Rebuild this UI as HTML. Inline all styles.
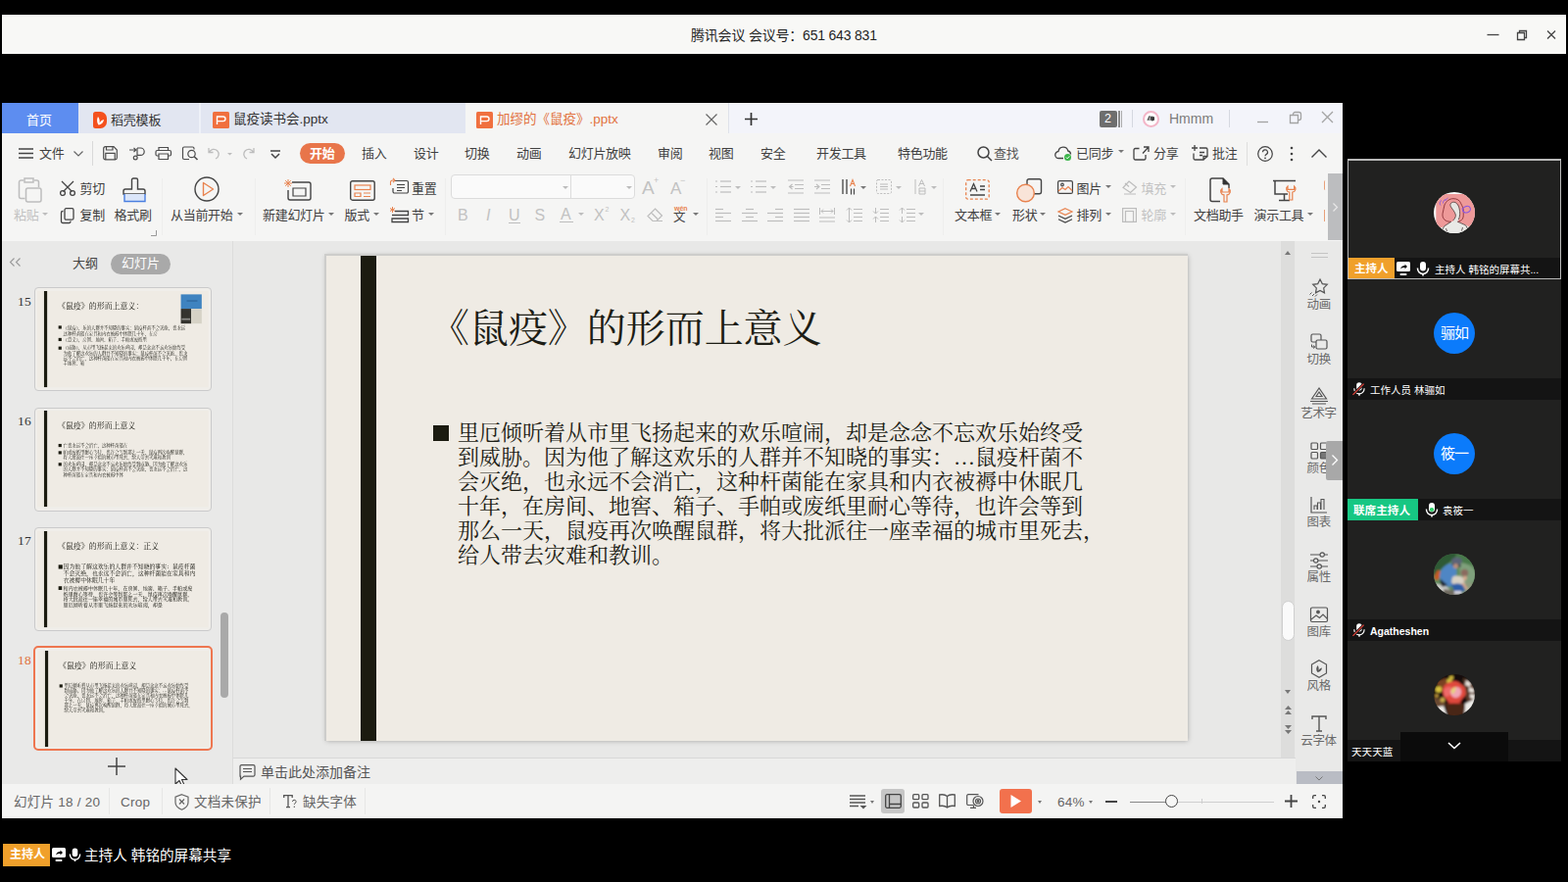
<!DOCTYPE html>
<html lang="zh-CN">
<head>
<meta charset="utf-8">
<title>腾讯会议</title>
<style>
*{box-sizing:border-box;margin:0;padding:0}
html,body{width:1600px;height:900px;overflow:hidden;background:#000}
body{font-family:"Liberation Sans","Noto Sans CJK SC",sans-serif;position:relative;color:#333}
.a{position:absolute}
.t{position:absolute;white-space:nowrap;line-height:1}
svg{position:absolute;overflow:visible}
#vid{left:0;top:0;width:0;height:0}
/* top meeting bar */
#topbar{left:2px;top:15px;width:1596px;height:40px;background:#f8f8f6}
/* ppt window */
#win{left:2px;top:105px;width:1368px;height:730px;background:#e8e8e7;overflow:hidden}
#tabbar{left:0;top:0;width:1368px;height:31px;background:#f3f4fa}
#menurow{left:0;top:31px;width:1368px;height:40px;background:#f5f5f4}
#ribbon{left:0;top:71px;width:1368px;height:70px;background:#f5f5f4}
#leftpane{left:0;top:141px;width:236px;height:554px;background:#e9e9e8}
#edit{left:236px;top:141px;width:1084px;height:527px;background:#e8e8e7}
#slide{left:331px;top:156px;width:879px;height:495px;background:#efebe4;box-shadow:-1px -1px 0 1px #cdcdcb,0 0 5px rgba(0,0,0,.3)}
#notes{left:236px;top:668px;width:1084px;height:27px;background:#eeeeed;border-top:1px solid #d8d8d8}
#taskpane{left:1320px;top:141px;width:48px;height:554px;background:#e9e9e8}
#status{left:0;top:695px;width:1368px;height:35px;background:#f4f4f3}
.mi{top:14px;font-size:13px;color:#404040;letter-spacing:-.3px;--ls:-.3px}

.sl{width:879px;height:495px;background:#efebe4;overflow:hidden;font-family:"Liberation Serif","Noto Serif CJK SC",serif;color:#1d1d15}
.sl .bar{left:34.500px;top:0;width:16.500px;height:495px;background:#1b1b10}
.sl .ti{font-size:40px;line-height:40px;white-space:nowrap;letter-spacing:-.05px;--ls:-.05px}
.sl .bd{left:134px;white-space:nowrap}
.sl .bu{left:108.500px;background:#1b1b10}
.th{left:33px;width:181px;height:106px;border:1.500px solid #cacacb;border-radius:4px;background:#f0eeea;overflow:hidden}
.th .sl{left:2px;top:2.500px;color:#15150e;transform:scale(.1986);transform-origin:0 0}
.tn{left:16px;font-family:"Liberation Serif",serif;font-size:13.500px;color:#333;line-height:1;letter-spacing:.3px;--ls:.3px}
/* video panel */
.tile{left:1375px;width:218px;height:123px;background:#212120;color:#fff}
.lbl{left:0;top:101px;width:218px;height:22px;background:#141414}
.av{left:88px;top:34px;width:42px;height:42px;border-radius:50%;overflow:hidden}
.avt{color:#fff;font-size:15px;text-align:center;line-height:42px;background:#0b7bfb;letter-spacing:-1px;--ls:-1px}
.nm{top:6.500px;font-size:10.500px;color:#fff}
</style>
</head>
<body>

<div class="a" id="topbar">
  <div class="t" style="left:703px;top:14px;font-size:14px;color:#1f1f1f;letter-spacing:-.2px;--ls:-.2px">腾讯会议 会议号：651 643 831&nbsp;</div>
  <svg style="left:1515px;top:14px" width="76" height="14" fill="none" stroke="#444" stroke-width="1.3">
    <path d="M0.5 6.5h12"/>
    <path d="M31.5 4.5h7v7h-7zM33.5 4.5v-2h7v7h-2"/>
    <path d="M62 2.5l8 8M70 2.5l-8 8"/>
  </svg>
</div>

<div class="a" id="win">
  <div class="a" id="tabbar">
    <div class="a" style="left:0;top:0;width:78px;height:31px;background:#5d8df0"></div>
    <div class="t" style="left:25px;top:11px;font-size:13px;color:#fff">首页&nbsp;</div>
    <div class="a" style="left:78px;top:0;width:395px;height:31px;background:#e2e6f1"></div>
    <div class="a" style="left:201px;top:0;width:2px;height:31px;background:#eef1f8"></div>
    <svg style="left:93px;top:9px" width="14" height="17" viewBox="0 0 14 17"><path d="M2.500 0h5a6.500 6.500 0 0 1 6.500 6.500v4a6.500 6.500 0 0 1-6.500 6.500h-5a2.500 2.500 0 0 1-2.500-2.500v-12a2.500 2.500 0 0 1 2.500-2.500z" fill="#f4511e"/><path d="M5.500 13.500c-1.800-2.500-1.800-6 -.5-8.500 1.500 2 2 4.500 1.500 6.500 1.200-2 2.800-3.200 4.500-3.500-.3 3-2.500 5-5 5.500z" fill="#fff"/></svg>
    <div class="t" style="left:111px;top:11px;font-size:13px;color:#333;letter-spacing:-.2px;--ls:-.2px">稻壳模板&nbsp;</div>
    <svg style="left:215px;top:9px" width="17" height="17" viewBox="0 0 17 17"><rect width="17" height="17" rx="1.500" fill="#f0703f"/><path d="M4.500 13v-8h6.200a2.300 2.300 0 0 1 0 4.600h-6.200" fill="none" stroke="#fff" stroke-width="1.400"/></svg>
    <div class="t" style="left:236px;top:10px;font-size:13.500px;color:#333">鼠疫读书会.pptx&nbsp;</div>
    <div class="a" style="left:473px;top:0;width:268px;height:32px;background:#f5f5f4"></div>
    <svg style="left:484px;top:9px" width="17" height="17" viewBox="0 0 17 17"><rect width="17" height="17" rx="1.500" fill="#f0703f"/><path d="M4.500 13v-8h6.200a2.300 2.300 0 0 1 0 4.600h-6.200" fill="none" stroke="#fff" stroke-width="1.400"/></svg>
    <div class="t" style="left:505px;top:10px;font-size:13.500px;color:#e2733f">加缪的《鼠疫》.pptx&nbsp;</div>
    <svg style="left:718px;top:11px" width="12" height="12" fill="none" stroke="#666" stroke-width="1.200"><path d="M.5.5l11 11M11.500.5l-11 11"/></svg>
    <div class="a" style="left:741px;top:0;width:1px;height:31px;background:#dfe2ea"></div>
    <svg style="left:758px;top:10px" width="13" height="13" fill="none" stroke="#333" stroke-width="1.700"><path d="M6.500 0v13M0 6.500h13"/></svg>
    <div class="a" style="left:1120px;top:8px;width:18px;height:17px;background:#6e6e6e;border-radius:2px"></div>
    <div class="t" style="left:1125px;top:10px;font-size:12.500px;color:#fff">2</div>
    <div class="a" style="left:1139px;top:8px;width:1.500px;height:17px;background:#8a8a8a"></div>
    <div class="a" style="left:1141.500px;top:8px;width:1px;height:17px;background:#aaa"></div>
    <div class="a" style="left:1153px;top:7px;width:1px;height:18px;background:#d5d8e0"></div>
    <div class="a" style="left:1164px;top:8px;width:17px;height:17px;border-radius:50%;background:#fff;border:2px solid #f3b6c8"></div>
    <svg style="left:1168px;top:12px" width="9" height="8" fill="none" stroke="#3a3a3a" stroke-width="1"><path d="M1 6l1.500-4M3 6v-5M4.500 2l3 .5v3l-2.500.5z" /><path d="M5 3h2v2.500h-2z" fill="#3a3a3a"/></svg>
    <div class="t" style="left:1191px;top:9px;font-size:14px;color:#7b7b7b">Hmmm</div>
    <div class="a" style="left:1252px;top:7px;width:1px;height:18px;background:#d5d8e0"></div>
    <svg style="left:1281px;top:8px" width="80" height="14" fill="none" stroke="#a3a3a3" stroke-width="1.300"><path d="M0 11.500h11"/><path d="M33.500 4.500h8v8h-8zM36.500 4.500v-1a2 2 0 0 1 2-2h4a2 2 0 0 1 2 2v4a2 2 0 0 1-2 2h-1" /><path d="M66 1l11 11M77 1l-11 11"/></svg>
  </div>
  <div class="a" id="menurow">
    <svg style="left:17px;top:15px" width="15" height="11" fill="none" stroke="#444" stroke-width="1.500"><path d="M0 1h15M0 5.500h15M0 10h15"/></svg>
    <div class="t mi" style="left:38px">文件&nbsp;</div>
    <svg style="left:73px;top:18px" width="10" height="6" fill="none" stroke="#666" stroke-width="1.200"><path d="M.5.5l4.500 4.500 4.500-4.500"/></svg>
    <div class="a" style="left:92px;top:8px;width:1px;height:25px;background:#d9d9d9"></div>
    <svg style="left:103px;top:13px" width="130" height="15" fill="none" stroke="#4d4d4d" stroke-width="1.200">
      <path d="M.7 2.500a1.800 1.800 0 0 1 1.800-1.800h8.500l3.300 3.300v8a1.800 1.800 0 0 1-1.800 1.800h-10a1.800 1.800 0 0 1-1.800-1.800zM3.500 1v3h6.500v-3M2.800 13.500v-6.200h9.400v6.200"/>
      <path d="M27 4h6.500M31.500 1.800l2.200 2.200-2.200 2.200M35 2h3.500a3.700 3.700 0 0 1 0 7.400h-3.500M35 2v8.300"/><circle cx="33.200" cy="12" r="1.900"/>
      <path d="M57 4.500v-3h9.500v3M57 10h-1.500a1.500 1.500 0 0 1-1.500-1.500v-2.500a1.500 1.500 0 0 1 1.500-1.500h12.500a1.500 1.500 0 0 1 1.500 1.500v2.500a1.500 1.500 0 0 1-1.500 1.500h-1.500M57 8h9.500v5.500h-9.500z"/>
      <path d="M88 13.500h-5a1.500 1.500 0 0 1-1.500-1.500v-9.500a1.500 1.500 0 0 1 1.500-1.500h8.500a1.500 1.500 0 0 1 1.500 1.500v1"/><circle cx="90.500" cy="8" r="3.700"/><path d="M93.200 10.800l3.300 3.200" stroke-width="1.600"/>
    </svg>
    <svg style="left:210px;top:14px" width="50" height="14" fill="none" stroke="#bdbdbd" stroke-width="1.300">
      <path d="M1 1v4.500h4.500M1.500 5.500a5 5 0 1 1 6.500 6.500"/>
      <path d="M47 1v4.500h-4.500M46.500 5.500a5 5 0 1 0-6.500 6.500"/>
      <path d="M20 6h5l-2.500 2.500z" fill="#bdbdbd" stroke="none"/>
    </svg>
    <svg style="left:274px;top:17px" width="10" height="9" fill="none" stroke="#444" stroke-width="1.500"><path d="M0 1h10M1 4l4 4 4-4"/></svg>
    <div class="a" style="left:304px;top:10px;width:46px;height:21px;border-radius:11px;background:#e8754a"></div>
    <div class="t mi" style="left:314px;color:#fff;font-weight:bold">开始&nbsp;</div>
    <div class="t mi" style="left:367px">插入&nbsp;</div>
    <div class="t mi" style="left:420px">设计&nbsp;</div>
    <div class="t mi" style="left:472px">切换&nbsp;</div>
    <div class="t mi" style="left:525px">动画&nbsp;</div>
    <div class="t mi" style="left:578px">幻灯片放映&nbsp;</div>
    <div class="t mi" style="left:669px">审阅&nbsp;</div>
    <div class="t mi" style="left:721px">视图&nbsp;</div>
    <div class="t mi" style="left:774px">安全&nbsp;</div>
    <div class="t mi" style="left:831px">开发工具&nbsp;</div>
    <div class="t mi" style="left:914px">特色功能&nbsp;</div>
    <svg style="left:995px;top:13px" width="16" height="16" fill="none" stroke="#444" stroke-width="1.500"><circle cx="6.500" cy="6.500" r="5.500"/><path d="M10.500 10.500l4.500 4.500"/></svg>
    <div class="t mi" style="left:1012px;color:#555">查找&nbsp;</div>
    <svg style="left:1074px;top:13px" width="20" height="16" viewBox="0 0 20 16"><path d="M9 12.500h-4.500a3.500 3.500 0 0 1-.5-7 5 5 0 0 1 9.800-.5 3.500 3.500 0 0 1 2.700 3.500" fill="none" stroke="#444" stroke-width="1.300"/><circle cx="13.500" cy="11.500" r="3.500" fill="#3bb54a"/><path d="M11.800 11.500l1.300 1.300 2.200-2.400" fill="none" stroke="#fff" stroke-width="1"/></svg>
    <div class="t mi" style="left:1096px">已同步&nbsp;</div>
    <div class="a" style="left:1139px;top:17px;border:3px solid transparent;border-top:3.500px solid #777"></div>
    <svg style="left:1154px;top:13px" width="17" height="15" fill="none" stroke="#444" stroke-width="1.300"><path d="M6.500 2.500h-4a1.500 1.500 0 0 0-1.500 1.500v8.500a1.500 1.500 0 0 0 1.500 1.500h9a1.500 1.500 0 0 0 1.500-1.500v-3.500M11 1h5v5M16 1l-6 6.500"/></svg>
    <div class="t mi" style="left:1175px">分享&nbsp;</div>
    <svg style="left:1214px;top:12px" width="17" height="16" fill="none" stroke="#444" stroke-width="1.300"><path d="M3 0v6M0 3h6M8 3h6.500a1.500 1.500 0 0 1 1.500 1.500v7h-4l0 3.500h-8.500a1.500 1.500 0 0 1-1.500-1.500v-5M16 11.500l-4 3.500M8 7.500h5M8 10.500h3"/></svg>
    <div class="t mi" style="left:1235px">批注&nbsp;</div>
    <div class="a" style="left:1270px;top:9px;width:1px;height:24px;background:#dedede"></div>
    <svg style="left:1281px;top:13px" width="16" height="16" fill="none" stroke="#444" stroke-width="1.200"><circle cx="8" cy="8" r="7.300"/><path d="M5.500 6.300a2.500 2.500 0 1 1 3.500 2.300c-.8.400-1 .8-1 1.700"/><circle cx="8" cy="12.300" r=".9" fill="#444" stroke="none"/></svg>
    <svg style="left:1314px;top:13px" width="4" height="16" fill="#444"><circle cx="2" cy="2" r="1.300"/><circle cx="2" cy="8" r="1.300"/><circle cx="2" cy="14" r="1.300"/></svg>
    <svg style="left:1336px;top:16px" width="16" height="9" fill="none" stroke="#444" stroke-width="1.400"><path d="M.5 8.500l7.500-7.500 7.500 7.500"/></svg>
  </div>
  <div class="a" id="ribbon">
    <svg style="left:17px;top:5px" width="24" height="26" fill="none" stroke="#bdbdbd" stroke-width="1.5"><path d="M5 3h-2.500a2 2 0 0 0-2 2v14.500a2 2 0 0 0 2 2h4M16 3h2.500a2 2 0 0 1 2 2v5M6 1h9v4h-9z"/><rect x="7.500" y="11" width="15.500" height="14" rx="2" fill="#f5f5f4"/></svg>
    <div class="t" style="left:12px;top:37.0px;font-size:13px;color:#c2c2c2;letter-spacing:-.3px;--ls:-.3px;">粘贴&nbsp;</div>
    <div class="a" style="left:41px;top:40.5px;border:3px solid transparent;border-top:3.500px solid #bdbdbd"></div>
    <svg style="left:59px;top:9px" width="16" height="15" fill="none" stroke="#444" stroke-width="1.3"><path d="M2 0l10.500 10.500M14 0l-10.500 10.500"/><circle cx="3" cy="12" r="2.400"/><circle cx="13" cy="12" r="2.400"/></svg>
    <div class="t" style="left:79.5px;top:9.5px;font-size:13px;color:#404040;letter-spacing:-.3px;--ls:-.3px;">剪切&nbsp;</div>
    <svg style="left:60px;top:36px" width="14" height="16" fill="none" stroke="#444" stroke-width="1.3"><rect x="4" y=".7" width="9" height="11.500" rx="1.500"/><path d="M2.500 3.500h-.5a1.500 1.500 0 0 0-1.500 1.500v9a1.500 1.500 0 0 0 1.500 1.500h6.500a1.500 1.500 0 0 0 1.500-1.500v-.5"/></svg>
    <div class="t" style="left:79.5px;top:37.0px;font-size:13px;color:#404040;letter-spacing:-.3px;--ls:-.3px;">复制&nbsp;</div>
    <svg style="left:124px;top:6px" width="23" height="25" fill="none" stroke="#444" stroke-width="1.4"><path d="M8.500 1.500a1.500 1.500 0 0 1 1.500-1.500h3a1.500 1.500 0 0 1 1.500 1.500v9.500h5.500a2 2 0 0 1 2 2v3h-22v-3a2 2 0 0 1 2-2h6.500z"/><path d="M1 16v7.500h21v-7.500" stroke="#4a7fe0" fill="#dbe6fa"/></svg>
    <div class="t" style="left:114.5px;top:37.0px;font-size:13px;color:#404040;letter-spacing:-.3px;--ls:-.3px;">格式刷&nbsp;</div>
    <div class="a" style="left:163px;top:6px;width:1px;height:58px;background:#eeeeed"></div>
    <svg style="left:152px;top:59px" width="6" height="6" fill="none" stroke="#999" stroke-width="1"><path d="M5.500 0v5.500h-5.500"/></svg>
    <svg style="left:196px;top:4px" width="26" height="26" fill="none" stroke="#444" stroke-width="1.4"><circle cx="13" cy="13" r="12" /><path d="M9.500 6.500l10 6.500-10 6.500z" stroke="#e8834f" stroke-linejoin="round"/></svg>
    <div class="t" style="left:172px;top:37.0px;font-size:13px;color:#404040;letter-spacing:-.3px;--ls:-.3px;">从当前开始&nbsp;</div>
    <div class="a" style="left:240px;top:40.5px;border:3px solid transparent;border-top:3.500px solid #777"></div>
    <div class="a" style="left:258px;top:6px;width:1px;height:58px;background:#eeeeed"></div>
    <svg style="left:288px;top:7px" width="28" height="22" fill="none" stroke="#444" stroke-width="1.4"><path d="M8 3h17a2 2 0 0 1 2 2v14a2 2 0 0 1-2 2h-19a2 2 0 0 1-2-2v-8"/><path d="M9 9h13v8h-13z" stroke-width="1.200"/><path d="M4 0v8M0 4h8M1.200 1.200l5.600 5.600M6.800 1.200l-5.600 5.600" stroke="#e8834f" stroke-width="1"/></svg>
    <div class="t" style="left:266px;top:37.0px;font-size:13px;color:#404040;letter-spacing:-.3px;--ls:-.3px;">新建幻灯片&nbsp;</div>
    <div class="a" style="left:332.5px;top:40.5px;border:3px solid transparent;border-top:3.500px solid #777"></div>
    <svg style="left:355px;top:8px" width="26" height="21" fill="none" stroke="#444" stroke-width="1.4"><rect x=".7" y=".7" width="24.500" height="19.500" rx="2"/><rect x="5" y="5" width="16" height="4.500" stroke="#e8834f" stroke-width="1.200"/><path d="M5 13h6v3.500h-6zM14 13h7M14 16.500h7" stroke="#e8834f" stroke-width="1.200"/></svg>
    <div class="t" style="left:349.5px;top:37.0px;font-size:13px;color:#404040;letter-spacing:-.3px;--ls:-.3px;">版式&nbsp;</div>
    <div class="a" style="left:379px;top:40.5px;border:3px solid transparent;border-top:3.500px solid #777"></div>
    <svg style="left:396px;top:7px" width="19" height="15" fill="none" stroke="#444" stroke-width="1.2"><path d="M4 1.500h13a1.500 1.500 0 0 1 1.500 1.500v9.500a1.500 1.500 0 0 1-1.500 1.500h-12.500a1.500 1.500 0 0 1-1.500-1.500v-3.500"/><path d="M7 5.500h8M7 8.500h8M7 11.500h5" stroke-width="1"/><path d="M.5 6v-3a2 2 0 0 1 2-2h2M3 -1.200l2 2.200-2 2.200" stroke="#e8834f" stroke-width="1.100"/></svg>
    <div class="t" style="left:418px;top:9.5px;font-size:13px;color:#404040;letter-spacing:-.3px;--ls:-.3px;">重置&nbsp;</div>
    <svg style="left:396px;top:35px" width="19" height="16" fill="none" stroke="#444" stroke-width="1.3"><path d="M5 4.500h13.500v4h-16.500M2 12h16.500v3.500h-16.500z"/><path d="M2.500 0v6M0 1.500l5 3M5 1.500l-5 3" stroke="#e8834f" stroke-width="1"/></svg>
    <div class="t" style="left:418px;top:37.0px;font-size:13px;color:#404040;letter-spacing:-.3px;--ls:-.3px;">节&nbsp;</div>
    <div class="a" style="left:435px;top:40.5px;border:3px solid transparent;border-top:3.500px solid #777"></div>
    <div class="a" style="left:452px;top:6px;width:1px;height:58px;background:#eeeeed"></div>
    <div class="a" style="left:457.5px;top:2px;width:188px;height:25px;border:1px solid #dcdcdc;border-radius:4px;background:#fafafa"></div>
    <div class="a" style="left:580px;top:2px;width:1px;height:25px;background:#dcdcdc"></div>
    <div class="a" style="left:572px;top:13.500px;border:3px solid transparent;border-top:3.500px solid #bbb"></div>
    <div class="a" style="left:637px;top:13.500px;border:3px solid transparent;border-top:3.500px solid #bbb"></div>
    <div class="t" style="left:653px;top:6px;font-size:19px;color:#c2c2c2">A</div><div class="t" style="left:665px;top:4px;font-size:9px;color:#c2c2c2">+</div>
    <div class="t" style="left:682px;top:8px;font-size:17px;color:#c2c2c2">A</div><div class="t" style="left:692px;top:4px;font-size:9px;color:#c2c2c2">−</div>
    <div class="t" style="left:465px;top:35.5px;font-size:16px;color:#c2c2c2">B</div>
    <div class="t" style="left:494px;top:35.5px;font-size:16px;color:#c2c2c2;font-style:italic">I</div>
    <div class="t" style="left:517px;top:35.5px;font-size:16px;color:#c2c2c2">U</div><div class="a" style="left:517px;top:51px;width:12px;height:1px;background:#bdbdbd"></div>
    <div class="t" style="left:543.5px;top:35.5px;font-size:16px;color:#c2c2c2">S</div>
    <div class="t" style="left:570px;top:35px;font-size:16px;color:#c2c2c2">A</div><div class="a" style="left:568.5px;top:49.5px;width:14px;height:1.500px;background:#bdbdbd"></div>
    <div class="a" style="left:587.5px;top:40.5px;border:3px solid transparent;border-top:3.500px solid #bdbdbd"></div>
    <div class="t" style="left:604px;top:36px;font-size:16px;color:#c2c2c2">X</div><div class="t" style="left:615.5px;top:34px;font-size:7px;color:#c2c2c2">2</div>
    <div class="t" style="left:630.5px;top:36px;font-size:16px;color:#c2c2c2">X</div><div class="t" style="left:642px;top:45px;font-size:7px;color:#c2c2c2">2</div>
    <svg style="left:658px;top:36px" width="17" height="15" fill="none" stroke="#bdbdbd" stroke-width="1.2"><path d="M8.500 1l7 7-5.500 5.500h-4l-5-5zM6 13.500h10M4.500 5l6.500 6.500"/></svg>
    <div class="t" style="left:685px;top:39.5px;font-size:12.500px;color:#444">文&nbsp;</div><div class="t" style="left:686px;top:33px;font-size:7px;color:#e8834f;font-weight:bold">wén</div>
    <div class="a" style="left:705px;top:40.5px;border:3px solid transparent;border-top:3.500px solid #777"></div>
    <div class="a" style="left:719px;top:6px;width:1px;height:58px;background:#eeeeed"></div>
    <svg style="left:728px;top:7px" width="16" height="15" fill="none" stroke="#bdbdbd" stroke-width="1.2"><path d="M5 2.0h11"/><path d="M5 7.5h11"/><path d="M5 13.0h11"/><path d="M0 2.0h2"/><path d="M0 7.5h2"/><path d="M0 13.0h2"/></svg>
    <div class="a" style="left:748px;top:13.500px;border:3px solid transparent;border-top:3.500px solid #bdbdbd"></div>
    <svg style="left:763.5px;top:7px" width="16" height="15" fill="none" stroke="#bdbdbd" stroke-width="1.2"><path d="M5 2.0h11"/><path d="M5 7.5h11"/><path d="M5 13.0h11"/><path d="M0 2.0h2"/><path d="M0 7.5h2"/><path d="M0 13.0h2"/></svg>
    <div class="a" style="left:784px;top:13.500px;border:3px solid transparent;border-top:3.500px solid #bdbdbd"></div>
    <svg style="left:802px;top:7px" width="16" height="15" fill="none" stroke="#bdbdbd" stroke-width="1.1"><path d="M0 1h16M7 5.500h9M7 9.500h9M0 14h16M4.500 5l-3 2.500 3 2.500M1.500 7.500h4"/></svg>
    <svg style="left:828.5px;top:7px" width="16" height="15" fill="none" stroke="#bdbdbd" stroke-width="1.1"><path d="M0 1h16M7 5.500h9M7 9.500h9M0 14h16M2 5l3 2.500-3 2.500M0 7.500h4.500"/></svg>
    <svg style="left:857px;top:7px" width="17" height="16" fill="none" stroke="#444" stroke-width="1.3"><path d="M1 0v15M5 0v15"/><path d="M8.500 7l2.500-6.500 2.500 6.500M9.500 4.500h3" stroke="#e8834f" stroke-width="1.100"/><path d="M9.500 9.500v6M12.500 9.500v6" stroke-width="1.100"/></svg>
    <div class="a" style="left:876px;top:13.500px;border:3px solid transparent;border-top:3.500px solid #777"></div>
    <svg style="left:892px;top:7px" width="16" height="15" fill="none" stroke="#bdbdbd" stroke-width="1"><rect x=".5" y=".5" width="15" height="14" rx="1.500" stroke-dasharray="2 1.500"/><path d="M4 5h8M4 7.500h8M4 10h8"/></svg>
    <div class="a" style="left:912px;top:13.500px;border:3px solid transparent;border-top:3.500px solid #bdbdbd"></div>
    <svg style="left:930.5px;top:7px" width="12" height="16" fill="none" stroke="#bdbdbd" stroke-width="1"><path d="M1 0v15"/><path d="M4.500 7l3-6.500 3 6.500M5.500 4.500h4M5 9h6v6h-6zM5 12h6"/></svg>
    <div class="a" style="left:948px;top:13.500px;border:3px solid transparent;border-top:3.500px solid #bdbdbd"></div>
    <svg style="left:728px;top:36px" width="16" height="15" fill="none" stroke="#bdbdbd" stroke-width="1.2"><path d="M0 1.5h8"/><path d="M0 5.5h16"/><path d="M0 9.5h8"/><path d="M0 13.5h16"/></svg>
    <svg style="left:755px;top:36px" width="16" height="15" fill="none" stroke="#bdbdbd" stroke-width="1.2"><path d="M4 1.5h8"/><path d="M0 5.5h16"/><path d="M4 9.5h8"/><path d="M0 13.5h16"/></svg>
    <svg style="left:781px;top:36px" width="16" height="15" fill="none" stroke="#bdbdbd" stroke-width="1.2"><path d="M8 1.5h8"/><path d="M0 5.5h16"/><path d="M8 9.5h8"/><path d="M0 13.5h16"/></svg>
    <svg style="left:808px;top:36px" width="16" height="15" fill="none" stroke="#bdbdbd" stroke-width="1.2"><path d="M0 1.5h16"/><path d="M0 5.5h16"/><path d="M0 9.5h16"/><path d="M0 13.5h16"/></svg>
    <svg style="left:834px;top:36px" width="16" height="15" fill="none" stroke="#bdbdbd" stroke-width="1"><path d="M.5 0v7M15.500 0v7M2 3.500h12M4 1.500l-2 2 2 2M12 1.500l2 2-2 2M0 10h16M0 14h16"/></svg>
    <svg style="left:862px;top:36px" width="16" height="15" fill="none" stroke="#bdbdbd" stroke-width="1"><path d="M7 1.500h9M7 5.500h9M7 9.500h9M7 13.500h9M2.500 0v15M0 2.500l2.500-2.500 2.500 2.500M0 12.500l2.500 2.500 2.500-2.500"/></svg>
    <svg style="left:888.5px;top:36px" width="16" height="15" fill="none" stroke="#bdbdbd" stroke-width="1"><path d="M7 1.500h9M7 5.500h9M7 9.500h9M7 13.500h9M2.500 0v6M0 3.500l2.500 2.500 2.500-2.500M2.500 15v-6M0 11.500l2.500-2.500 2.500 2.500"/></svg>
    <svg style="left:915.5px;top:36px" width="16" height="15" fill="none" stroke="#bdbdbd" stroke-width="1"><path d="M7 1.500h9M7 5.500h9M7 9.500h9M7 13.500h9M2.500 0v6M0 2.500l2.500-2.500 2.500 2.500M2.500 15v-6M0 12.500l2.500 2.500 2.500-2.500"/></svg>
    <div class="a" style="left:935px;top:40.5px;border:3px solid transparent;border-top:3.500px solid #bdbdbd"></div>
    <div class="a" style="left:960px;top:6px;width:1px;height:58px;background:#eeeeed"></div>
    <svg style="left:983px;top:7px" width="25" height="21" fill="none" stroke="#444" stroke-width="1.3"><rect x=".7" y=".7" width="23.500" height="19.500" rx="2" stroke="#e8834f" stroke-dasharray="3 2"/><path d="M5 12.500l3.500-8 3.500 8M6.300 9.500h4.400M15 7h5M15 10.500h5M5 16h15"/></svg>
    <div class="t" style="left:972px;top:37.0px;font-size:13px;color:#404040;letter-spacing:-.3px;--ls:-.3px;">文本框&nbsp;</div>
    <div class="a" style="left:1013px;top:40.5px;border:3px solid transparent;border-top:3.500px solid #777"></div>
    <svg style="left:1035px;top:6px" width="27" height="25" fill="none" stroke="#444" stroke-width="1.4"><rect x="11" y=".7" width="14.500" height="15" rx="2"/><circle cx="9.500" cy="15" r="8.800" fill="#f9e4d8" stroke="#e8834f"/></svg>
    <div class="t" style="left:1031px;top:37.0px;font-size:13px;color:#404040;letter-spacing:-.3px;--ls:-.3px;">形状&nbsp;</div>
    <div class="a" style="left:1059px;top:40.5px;border:3px solid transparent;border-top:3.500px solid #777"></div>
    <svg style="left:1077px;top:8px" width="16" height="14" fill="none" stroke="#444" stroke-width="1.2"><rect x=".6" y=".6" width="14.800" height="12.800" rx="1.500"/><circle cx="5" cy="4.500" r="1.300"/><path d="M1 11l4-3.500 3 2 3-3 4 4" stroke="#e8834f"/></svg>
    <div class="t" style="left:1096.5px;top:9.5px;font-size:13px;color:#404040;letter-spacing:-.3px;--ls:-.3px;">图片&nbsp;</div>
    <div class="a" style="left:1126px;top:13px;border:3px solid transparent;border-top:3.500px solid #777"></div>
    <svg style="left:1142.5px;top:8px" width="16" height="15" fill="none" stroke="#bdbdbd" stroke-width="1.2"><path d="M7 1l7.500 6-6 5.500-7.500-5zM2 14h12M3 3l4 3.500"/></svg>
    <div class="t" style="left:1162.5px;top:9.5px;font-size:13px;color:#c2c2c2;letter-spacing:-.3px;--ls:-.3px;">填充&nbsp;</div>
    <div class="a" style="left:1192px;top:13px;border:3px solid transparent;border-top:3.500px solid #bdbdbd"></div>
    <svg style="left:1077px;top:36px" width="16" height="16" fill="none" stroke="#444" stroke-width="1.2"><path d="M8 .7l7 3.300-7 3.300-7-3.300z" stroke="#e8834f"/><path d="M1 8l7 3.300 7-3.300M1 11.700l7 3.300 7-3.300" stroke="#444"/></svg>
    <div class="t" style="left:1096.5px;top:37.0px;font-size:13px;color:#404040;letter-spacing:-.3px;--ls:-.3px;">排列&nbsp;</div>
    <div class="a" style="left:1126px;top:40.5px;border:3px solid transparent;border-top:3.500px solid #777"></div>
    <svg style="left:1143px;top:36px" width="15" height="15" fill="none" stroke="#bdbdbd" stroke-width="1.2"><rect x=".6" y=".6" width="13.800" height="13.800"/><rect x="3.500" y="3.500" width="8" height="11"/></svg>
    <div class="t" style="left:1162.5px;top:37.0px;font-size:13px;color:#c2c2c2;letter-spacing:-.3px;--ls:-.3px;">轮廓&nbsp;</div>
    <div class="a" style="left:1192px;top:40.5px;border:3px solid transparent;border-top:3.500px solid #bdbdbd"></div>
    <div class="a" style="left:1207px;top:6px;width:1px;height:58px;background:#eeeeed"></div>
    <svg style="left:1232px;top:5px" width="23" height="26" fill="none" stroke="#444" stroke-width="1.3"><path d="M11 24.500h-8a2 2 0 0 1-2-2v-19.500a2 2 0 0 1 2-2h11l6 6v4" stroke-width="1.500"/><path d="M14 1v6h6" fill="#333" stroke="#333" stroke-width="1"/><path d="M13 11.500a3.500 3.500 0 0 0 2 6.300v7.200h3v-7.200a3.500 3.500 0 0 0 2-6.300v3.500h-3.500-3.500z" stroke="#e8834f" stroke-width="1.200"/></svg>
    <div class="t" style="left:1216px;top:37.0px;font-size:13px;color:#404040;letter-spacing:-.3px;--ls:-.3px;">文档助手&nbsp;</div>
    <svg style="left:1297px;top:7px" width="24" height="24" fill="none" stroke="#444" stroke-width="1.3"><path d="M0 1.500h23M2 1.500v13.500h13M11.500 15v6M6 21.500h11" stroke-width="1.500"/><path d="M15 7a3.300 3.300 0 0 0 1.800 6v8h3v-8a3.300 3.300 0 0 0 1.800-6v3.300h-3.300-3.300z" stroke="#e8834f" stroke-width="1.200" fill="#f5f5f4"/></svg>
    <div class="t" style="left:1277.5px;top:37.0px;font-size:13px;color:#404040;letter-spacing:-.3px;--ls:-.3px;">演示工具&nbsp;</div>
    <div class="a" style="left:1332px;top:40.5px;border:3px solid transparent;border-top:3.500px solid #777"></div>
    <div class="a" style="left:1349px;top:8px;width:3px;height:10px;border-left:1.500px solid #e8a07a;border-radius:3px"></div><div class="a" style="left:1349px;top:38px;width:2px;height:12px;border-left:1.500px solid #e8a07a"></div>
    <div class="a" style="left:1353px;top:1px;width:15px;height:68px;background:#bcbdbf"></div><svg style="left:1357.5px;top:31px" width="5" height="9" fill="none" stroke="#e8e8e8" stroke-width="1.200"><path d="M.5.5l4 4-4 4"/></svg>
  </div>
  <div class="a" id="leftpane">
    <svg style="left:8px;top:17px" width="11" height="9" fill="none" stroke="#999" stroke-width="1.100"><path d="M4.500.5l-4 4 4 4M10.500.5l-4 4 4 4"/></svg>
    <div class="t" style="left:72px;top:16px;font-size:13px;color:#444">大纲&nbsp;</div>
    <div class="a" style="left:111px;top:13px;width:61px;height:21px;border-radius:11px;background:#a9a9a9"></div>
    <div class="t" style="left:122px;top:16px;font-size:13px;color:#fff">幻灯片&nbsp;</div>
    <div class="t tn" style="top:55px">15</div>
    <div class="a th" style="top:47px"><div class="a sl"><!--S15--><div class="a bar"></div><div class="a ti" style="left:106px;top:58px">《鼠疫》的形而上意义：&nbsp;</div><div class="a bu" style="top:178.4px;width:16.1px;height:16.1px"></div><div class="a bd" style="top:170.5px;font-size:22px;line-height:31px">《鼠疫》，乐的人群并不知晓的事实：鼠疫杆菌不会灭绝，也永远&nbsp;<br>这种杆菌能在家具和内衣被褥中休眠几十年，在房&nbsp;</div><div class="a bu" style="top:241.4px;width:16.1px;height:16.1px"></div><div class="a bd" style="top:233.5px;font-size:22px;line-height:31px">《意义》，房间、地窖、箱子、手帕或废纸里&nbsp;</div><div class="a bu" style="top:284.7px;width:16.1px;height:16.1px"></div><div class="a bd" style="top:279px;font-size:22px;line-height:26.5px">《威胁》，从市里飞扬起来的欢乐喧闹，却是念念不忘欢乐始终受&nbsp;<br>为他了解这欢乐的人群并不知晓的事实：鼠疫杆菌不会灭绝，也永&nbsp;<br>远不会消亡，这种杆菌能在家具和内衣被褥中休眠几十年，在房间&nbsp;<br>手地窖、箱&nbsp;</div><div class="a" style="left:738px;top:17px;width:107px;height:74px;background:#3f83c0"></div><div class="a" style="left:738px;top:91px;width:53px;height:76px;background:#34332e"></div><div class="a" style="left:791px;top:91px;width:54px;height:76px;background:#d6d2c6"></div><div class="a" style="left:768px;top:48px;width:55px;height:5px;background:#2a5f94"></div><div class="a" style="left:742px;top:140px;width:44px;height:9px;background:#8a8a86"></div><!--/S15--></div></div>
    <div class="t tn" style="top:177px">16</div>
    <div class="a th" style="top:169.500px"><div class="a sl"><!--S16--><div class="a bar"></div><div class="a ti" style="left:106px;top:58px">《鼠疫》的形而上意义&nbsp;</div><div class="a bu" style="top:171.1px;width:16.1px;height:16.1px"></div><div class="a bd" style="top:165.7px;font-size:22px;line-height:26px">亡也永远不会消亡，这种杆菌能在&nbsp;</div><div class="a bu" style="top:207.6px;width:16.1px;height:16.1px"></div><div class="a bd" style="top:202px;font-size:22px;line-height:26.3px">帕或废纸里耐心等待，也许会等到那么一天，鼠疫再次唤醒鼠群，&nbsp;<br>将大批派往一座幸福的城市里死去，给人带去灾难和教训&nbsp;</div><div class="a bu" style="top:268.4px;width:16.1px;height:16.1px"></div><div class="a bd" style="top:263px;font-size:22px;line-height:26px">的欢乐喧闹，却是念念不忘欢乐始终受到威胁。因为他了解这欢乐&nbsp;<br>的人群并不知晓的事实：鼠疫杆菌不会灭绝，也永远不会消亡，这&nbsp;<br>种杆菌能在家具和内衣被褥中休&nbsp;</div><!--/S16--></div></div>
    <div class="t tn" style="top:299px">17</div>
    <div class="a th" style="top:292px"><div class="a sl"><!--S17--><div class="a bar"></div><div class="a ti" style="left:106px;top:57px">《鼠疫》的形而上意义：正义&nbsp;</div><div class="a bu" style="top:172.6px;width:21.5px;height:21.5px"></div><div class="a bd" style="top:165.5px;font-size:29.5px;line-height:34.6px">因为他了解这欢乐的人群并不知晓的事实：鼠疫杆菌&nbsp;<br>不会灭绝，也永远不会消亡，这种杆菌能在家具和内&nbsp;<br>衣被褥中休眠几十年&nbsp;</div><div class="a bu" style="top:283.0px;width:18.6px;height:18.6px"></div><div class="a bd" style="top:277px;font-size:25.5px;line-height:29.6px">和内衣被褥中休眠几十年，在房间、地窖、箱子、手帕或废&nbsp;<br>纸里耐心等待，也许会等到那么一天，鼠疫再次唤醒鼠群，&nbsp;<br>将大批派往一座幸福的城市里死去，给人带去灾难和教训。&nbsp;<br>里厄倾听着从市里飞扬起来的欢乐喧闹，却是&nbsp;</div><!--/S17--></div></div>
    <div class="t tn" style="top:421px;color:#e0703c">18</div>
    <div class="a th" style="top:413px;left:32px;width:183px;height:107px;border:2px solid #ee7650;border-radius:5px"><div class="a sl" style="left:2.500px;top:2.500px"><!--S18--><div class="a bar"></div><div class="a ti" style="left:106px;top:58px">《鼠疫》的形而上意义&nbsp;</div><div class="a bu" style="top:172.9px;width:16.1px;height:16.1px"></div><div class="a bd" style="top:168px;font-size:22px;line-height:25px">里厄倾听着从市里飞扬起来的欢乐喧闹，却是念念不忘欢乐始终受&nbsp;<br>到威胁。因为他了解这欢乐的人群并不知晓的事实：…鼠疫杆菌不&nbsp;<br>会灭绝，也永远不会消亡，这种杆菌能在家具和内衣被褥中休眠几&nbsp;<br>十年，在房间、地窖、箱子、手帕或废纸里耐心等待，也许会等到&nbsp;<br>那么一天，鼠疫再次唤醒鼠群，将大批派往一座幸福的城市里死去，&nbsp;<br>给人带去灾难和教训。&nbsp;</div><!--/S18--></div></div>
    <svg style="left:108px;top:527px" width="18" height="18" fill="none" stroke="#444" stroke-width="1.500"><path d="M9 0v18M0 9h18"/></svg>
    <div class="a" style="left:223px;top:379px;width:8px;height:87px;border-radius:4px;background:#a9a9a9"></div>
    <svg style="left:176px;top:537px" width="15" height="21" viewBox="0 0 15 21"><path d="M1 1v16l4-3.500 3 6.500 2.500-1-3-6.500h5.500z" fill="#fff" stroke="#333" stroke-width="1.100" stroke-linejoin="round"/></svg>
    <div class="a" style="left:235px;top:0;width:1px;height:554px;background:#dcdcdb"></div>
  </div>
  <div class="a" id="edit">
    <div class="a" style="left:1069px;top:0;width:14px;height:527px;background:#dddddc"></div>
    <div class="a" style="left:1073px;top:10px;border:3.500px solid transparent;border-bottom:4px solid #777;border-top:none"></div>
    <div class="a" style="left:1070px;top:367px;width:13px;height:41px;border-radius:6.500px;background:#fafafa;border:1px solid #cfcfcf"></div>
    <div class="a" style="left:1073px;top:458px;border:3.500px solid transparent;border-top:4px solid #777;border-bottom:none"></div>
    <svg style="left:1073px;top:474px" width="7" height="9" fill="#777"><path d="M0 4l3.500-4 3.500 4zM0 9l3.500-4 3.500 4z"/></svg>
    <svg style="left:1073px;top:494px" width="7" height="9" fill="#777"><path d="M0 0l3.500 4 3.500-4zM0 5l3.500 4 3.500-4z"/></svg>
  </div>
  <div class="a sl" id="slide"><!--MAIN--><div class="a bar"></div><div class="a ti" style="left:106px;top:54.5px">《鼠疫》的形而上意义&nbsp;</div><div class="a bu" style="top:172.9px;width:16.1px;height:16.1px"></div><div class="a bd" style="top:168px;font-size:22px;line-height:25px">里厄倾听着从市里飞扬起来的欢乐喧闹，却是念念不忘欢乐始终受&nbsp;<br>到威胁。因为他了解这欢乐的人群并不知晓的事实：…鼠疫杆菌不&nbsp;<br>会灭绝，也永远不会消亡，这种杆菌能在家具和内衣被褥中休眠几&nbsp;<br>十年，在房间、地窖、箱子、手帕或废纸里耐心等待，也许会等到&nbsp;<br>那么一天，鼠疫再次唤醒鼠群，将大批派往一座幸福的城市里死去，&nbsp;<br>给人带去灾难和教训。&nbsp;</div><!--/MAIN--></div>
  <div class="a" id="notes">
    <svg style="left:6px;top:6px" width="17" height="16" fill="none" stroke="#555" stroke-width="1.200"><path d="M2 .6h12.500a1.500 1.500 0 0 1 1.500 1.500v8.500a1.500 1.500 0 0 1-1.500 1.500h-9.500l-3.500 3v-3h-.5v-10a1.500 1.500 0 0 1 1.500-1.500zM4 4.500h9M4 7.500h9"/></svg>
    <div class="t" style="left:28px;top:7px;font-size:14px;color:#555">单击此处添加备注&nbsp;</div>
  </div>
  <div class="a" id="taskpane">
    <div class="a" style="left:16px;top:12px;width:17px;height:1px;background:#c4c4c4"></div><div class="a" style="left:16px;top:16px;width:17px;height:1px;background:#c4c4c4"></div>
    <svg style="left:13px;top:38px" width="22" height="19" fill="none" stroke="#555" stroke-width="1.200"><path d="M12 1l2.300 4.600 5 .7-3.600 3.600.8 5-4.500-2.400-4.500 2.400.8-5-3.600-3.600 5-.7z"/><path d="M3.500 14.500l-2 2M6 16l-2 2M9 16.500l-2 2" stroke-width="1"/></svg>
    <div class="t" style="left:11.5px;top:59px;font-size:12.500px;color:#6a6a6a;letter-spacing:-.3px;--ls:-.3px">动画&nbsp;</div>
    <svg style="left:13px;top:93.6px" width="22" height="19" fill="none" stroke="#555" stroke-width="1.200"><rect x="3" y="1" width="10" height="8" rx="1.500"/><rect x="8" y="7" width="11" height="9" rx="1.500" fill="#e9e9e8"/><path d="M3.500 11.500v2.500h3M5 12.500l1.800 1.500-1.800 1.500" stroke-width="1"/></svg>
    <div class="t" style="left:11.5px;top:114.6px;font-size:12.500px;color:#6a6a6a;letter-spacing:-.3px;--ls:-.3px">切换&nbsp;</div>
    <svg style="left:13px;top:149.2px" width="22" height="19" fill="none" stroke="#555" stroke-width="1.200"><path d="M3.500 12l7.500-11 7.500 11zM8 9.500l3-4.500 3 4.500z"/><path d="M2 14.500h18M4 17h14" stroke-width="1"/></svg>
    <div class="t" style="left:5.2px;top:170.2px;font-size:12.500px;color:#6a6a6a;letter-spacing:-.3px;--ls:-.3px">艺术字&nbsp;</div>
    <svg style="left:13px;top:204.8px" width="22" height="19" fill="none" stroke="#555" stroke-width="1.200"><rect x="3" y="1" width="6.500" height="6.500" rx="1"/><rect x="12.500" y="1" width="6.500" height="6.500" rx="1"/><rect x="3" y="10.500" width="6.500" height="6.500" rx="1"/><rect x="12.500" y="10.500" width="6.500" height="6.500" rx="1" fill="#777"/></svg>
    <div class="t" style="left:11.5px;top:225.8px;font-size:12.500px;color:#6a6a6a;letter-spacing:-.3px;--ls:-.3px">颜色&nbsp;</div>
    <svg style="left:13px;top:260.4px" width="22" height="19" fill="none" stroke="#555" stroke-width="1.200"><path d="M3 1v16h16"/><path d="M6 14v-4h3v4M9.500 14v-7h3v7M13 14v-10.500h3v10.500" stroke-width="1.100"/></svg>
    <div class="t" style="left:11.5px;top:281.4px;font-size:12.500px;color:#6a6a6a;letter-spacing:-.3px;--ls:-.3px">图表&nbsp;</div>
    <svg style="left:13px;top:316px" width="22" height="19" fill="none" stroke="#555" stroke-width="1.200"><path d="M2 4h10M16.500 4h3.500M2 10h3.500M10 10h10M2 16h7M13.500 16h6.500"/><circle cx="14.200" cy="4" r="2.200"/><circle cx="7.700" cy="10" r="2.200"/><circle cx="11.200" cy="16" r="2.200"/></svg>
    <div class="t" style="left:11.5px;top:337px;font-size:12.500px;color:#6a6a6a;letter-spacing:-.3px;--ls:-.3px">属性&nbsp;</div>
    <svg style="left:13px;top:371.6px" width="22" height="19" fill="none" stroke="#555" stroke-width="1.200"><rect x="2.500" y="2" width="17" height="14.500" rx="1.500"/><circle cx="10" cy="6.500" r="1.300" fill="#555"/><path d="M3 14l5-4 3.500 2.500 3.500-3.500 4.500 4.500" stroke-width="1.100"/></svg>
    <div class="t" style="left:11.5px;top:392.6px;font-size:12.500px;color:#6a6a6a;letter-spacing:-.3px;--ls:-.3px">图库&nbsp;</div>
    <svg style="left:13px;top:427.2px" width="22" height="19" fill="none" stroke="#555" stroke-width="1.200"><path d="M11 .8l7.500 4.300v8.800l-7.500 4.300-7.500-4.300v-8.800z"/><path d="M9.500 13c-2-2.500-1.500-5 .3-7 .8 1.800 1 3.500.7 5 1-1.500 2-2.300 3.500-2.500-.3 2.500-2 4-4.500 4.500z" fill="#555" stroke="none"/></svg>
    <div class="t" style="left:11.5px;top:448.2px;font-size:12.500px;color:#6a6a6a;letter-spacing:-.3px;--ls:-.3px">风格&nbsp;</div>
    <svg style="left:13px;top:482.8px" width="22" height="19" fill="none" stroke="#555" stroke-width="1.200"><path d="M4 5v-3h14v3M11 2v15M8 17h6" stroke-width="1.400"/></svg>
    <div class="t" style="left:5.2px;top:503.8px;font-size:12.500px;color:#6a6a6a;letter-spacing:-.3px;--ls:-.3px">云字体&nbsp;</div>
    <div class="a" style="left:31px;top:204px;width:17px;height:40px;background:#a8a8a8;border-radius:2px 0 0 2px"></div><svg style="left:37px;top:218px" width="6" height="11" fill="none" stroke="#fff" stroke-width="1.300"><path d="M.5.5l5 5-5 5"/></svg>
    <div class="a" style="left:1px;top:541px;width:47px;height:13px;background:#b9bcc4"></div><svg style="left:20px;top:546px" width="8" height="5" fill="none" stroke="#777" stroke-width="1"><path d="M.5.5l3.500 3.500 3.500-3.500"/></svg>
  </div>
  <div class="a" id="status">
    <div class="t" style="left:12px;top:11.8px;font-size:13.500px;color:#666;letter-spacing:.25px;--ls:.25px">幻灯片 18 / 20&nbsp;</div>
    <div class="a" style="left:109px;top:4px;width:1px;height:27px;background:#e6e6e5"></div>
    <div class="t" style="left:121px;top:11.8px;font-size:13.500px;color:#666;letter-spacing:.25px;--ls:.25px">Crop</div>
    <div class="a" style="left:163px;top:4px;width:1px;height:27px;background:#e6e6e5"></div>
    <svg style="left:176px;top:10px" width="15" height="17" fill="none" stroke="#666" stroke-width="1.200"><path d="M7.500 .7l6.500 2.500v5.500c0 3.500-3 6-6.500 7.500-3.500-1.500-6.500-4-6.500-7.500v-5.500zM5 5.500l5 5M10 5.500l-5 5"/></svg>
    <div class="t" style="left:196px;top:11.8px;font-size:13.500px;color:#666;letter-spacing:.25px;--ls:.25px">文档未保护&nbsp;</div>
    <div class="a" style="left:273px;top:4px;width:1px;height:27px;background:#e6e6e5"></div>
    <svg style="left:287px;top:11px" width="14" height="14" fill="none" stroke="#555" stroke-width="1.300"><path d="M.7 3v-2.300h8.500v2.300M5 .7v12M3 12.700h4"/><path d="M9.500 7a1.800 1.800 0 1 1 2.500 1.700c-.5.300-.7.600-.7 1.300" stroke-width="1"/><circle cx="11.300" cy="12.300" r=".7" fill="#555" stroke="none"/></svg>
    <div class="t" style="left:307px;top:11.8px;font-size:13.500px;color:#666;letter-spacing:.25px;--ls:.25px">缺失字体&nbsp;</div>
    <div class="a" style="left:370px;top:4px;width:1px;height:27px;background:#e6e6e5"></div>
    <svg style="left:865px;top:11px" width="18" height="15" fill="none" stroke="#555" stroke-width="1.300"><path d="M0 1h16M0 4.500h16M0 8h16M0 11.500h9"/><path d="M10.500 11l3.500 3.500 3.500-3.500z" fill="#555" stroke="none"/></svg>
    <div class="a" style="left:886px;top:17px;border:2.500px solid transparent;border-top:3px solid #777"></div>
    <div class="a" style="left:897px;top:5px;width:24px;height:25px;border-radius:3px;background:#c6c6c6"></div>
    <svg style="left:901px;top:10px" width="17" height="15" fill="none" stroke="#444" stroke-width="1.300"><rect x=".7" y=".7" width="15.600" height="13.600" rx="1.500"/><path d="M4.500 .7v13.600M4.500 10.500h12"/></svg>
    <svg style="left:929px;top:10px" width="17" height="15" fill="none" stroke="#555" stroke-width="1.300"><rect x=".7" y=".7" width="6" height="5" rx="1"/><rect x="10" y=".7" width="6" height="5" rx="1"/><rect x=".7" y="9" width="6" height="5" rx="1"/><rect x="10" y="9" width="6" height="5" rx="1"/></svg>
    <svg style="left:956px;top:10px" width="17" height="15" fill="none" stroke="#555" stroke-width="1.300"><path d="M8.500 2.500c-2-1.800-5-2-7.800-1.500v11.500c2.800-.5 5.800-.3 7.800 1.500 2-1.800 5-2 7.800-1.500v-11.500c-2.800-.5-5.800-.3-7.800 1.500zM8.500 2.500v11.500"/></svg>
    <svg style="left:984px;top:10px" width="18" height="15" fill="none" stroke="#555" stroke-width="1.200"><path d="M7 11.500h-5a1.300 1.300 0 0 1-1.300-1.300v-8.200a1.300 1.300 0 0 1 1.300-1.300h10.500M7.500 11.500v2.500M4 14.300h6"/><circle cx="12" cy="7.500" r="5"/><circle cx="12" cy="7.500" r="2.500"/><circle cx="12" cy="7.500" r=".8" fill="#555"/></svg>
    <div class="a" style="left:1018px;top:5px;width:33px;height:25px;border-radius:3px;background:#f2714d"></div>
    <svg style="left:1029px;top:11px" width="11" height="13" fill="#fff"><path d="M.5 0l10.500 6.500-10.500 6.500z"/></svg>
    <div class="a" style="left:1056.5px;top:17px;border:2.500px solid transparent;border-top:3px solid #777"></div>
    <div class="t" style="left:1077px;top:11.8px;font-size:13.500px;color:#666;letter-spacing:.25px;--ls:.25px">64%</div>
    <div class="a" style="left:1108.5px;top:17px;border:2.500px solid transparent;border-top:3px solid #777"></div>
    <div class="a" style="left:1126px;top:17px;width:12px;height:2px;background:#444"></div>
    <div class="a" style="left:1151px;top:17.500px;width:42px;height:1px;background:#888"></div><div class="a" style="left:1193px;top:17.500px;width:105px;height:1px;background:#cfcfcf"></div><div class="a" style="left:1224px;top:15px;width:1px;height:5px;background:#cfcfcf"></div>
    <div class="a" style="left:1186.5px;top:11px;width:13px;height:13px;border-radius:50%;border:1.300px solid #444;background:#f7f7f6"></div>
    <svg style="left:1309px;top:11px" width="13" height="13" fill="none" stroke="#444" stroke-width="1.800"><path d="M6.500 0v13M0 6.500h13"/></svg>
    <svg style="left:1337px;top:11px" width="14" height="14" fill="none" stroke="#444" stroke-width="1.300"><path d="M.7 4v-2a1.300 1.300 0 0 1 1.300-1.300h2M10 .7h2a1.300 1.300 0 0 1 1.300 1.300v2M13.300 10v2a1.300 1.300 0 0 1-1.300 1.300h-2M4 13.300h-2a1.300 1.300 0 0 1-1.300-1.300v-2"/><circle cx="7" cy="7" r="1.200" fill="#444" stroke="none"/></svg>
  </div>
</div>

<div class="a" id="vid">
  <div class="a tile" style="top:162px">
    <div class="a av" style="background:#fbfbfb"><svg style="left:0;top:0" width="42" height="42" viewBox="0 0 42 42">
      <rect x="2.300" y="2" width="40" height="34" fill="#ee9999"/>
      <path d="M6 42l2-5.500 10-6.500h6.500l11 5 2 7z" fill="#e9e9e6"/>
      <path d="M19.700 10.300c-2.500.5-3.500 2.500-2.200 4.700 1.500 2.500 4 5 4.800 8 .5 2-.8 4-2.600 6l.300 2h5l.300-2.500c1.700-3 1.700-8 .700-11.500-.800-3.500-3-7.200-6.300-6.700z" fill="#e6e6e2"/>
      <path d="M11 13c2-4 5-6.300 9-6.300 4 0 6.500 1.800 7.500 4.500 1.500 3 3 5.500 2.800 8-.3 3 .5 6-1 8.300-1 1.500-3 2.500-5 2.800M11 13c-.5 3-1.500 6-2 9.300-.3 3 1 5.500 3 6.700 1.800 1 4 1.300 5.700 1.300" fill="none" stroke="#8a2f36" stroke-width=".9"/>
      <path d="M19.700 10.300c-2.500.5-3.500 2.500-2.200 4.700 1.500 2.500 4 5 4.800 8 .5 2-.8 4-2.600 6M25.300 28c1.700-3 1.700-8 .700-11.500-.800-3.500-3-6.700-6.300-6.200" fill="none" stroke="#3a2a2a" stroke-width=".7"/>
      <path d="M17.700 30.300l-7 4.500-3 5.500M24.500 30.300l8 3.500 3 5M12.500 37l1 3M29.500 36l-1 3.500" fill="none" stroke="#3a2a2a" stroke-width=".7"/>
      <ellipse cx="33.500" cy="17.700" rx="4" ry="3.200" fill="none" stroke="#8a55e0" stroke-width="1.100" transform="rotate(-20 33.500 17.700)"/>
      <path d="M29 16.500c.5 2.500 1.500 4 3 4.500" fill="none" stroke="#8a55e0" stroke-width="1"/>
      <path d="M7 13.500c-1.500-1.500-1-4 1-5M9.500 11.500c0-2 1-3.500 2.500-4M12 9c.5-1.500 1.500-2.500 2.500-3" fill="none" stroke="#8a55e0" stroke-width=".9"/>
    </svg></div>
    <div class="a lbl">
      <div class="a" style="left:0;top:0;width:48px;height:22px;background:#f0a02b"></div>
      <div class="t" style="left:7px;top:6px;font-size:11.500px;color:#fff;font-weight:bold">主持人&nbsp;</div>
      <svg style="left:50px;top:4px" width="15" height="15" viewBox="0 0 15 15"><rect x="0" y="0" width="14" height="10" rx="1.500" fill="#fff"/><rect x="3.500" y="12" width="7" height="2" rx="1" fill="#fff"/><path d="M4 7.500c.5-2.500 2.500-3.500 4.500-3.500v-1.500l2.500 2.500-2.500 2.500v-1.500c-1.800 0-3.300.4-4.500 1.500z" fill="#141414"/></svg>
      <svg style="left:70px;top:4px" width="14" height="15" viewBox="0 0 14 15"><rect x="4" y="0" width="6" height="9.500" rx="3" fill="#fff"/><path d="M1.500 6.500v.5a5.500 5.500 0 0 0 11 0v-.5" fill="none" stroke="#fff" stroke-width="1.500"/><path d="M7 12v2.500" stroke="#fff" stroke-width="1.600"/></svg>
      <div class="t nm" style="left:89px">主持人 韩铭的屏幕共...&nbsp;</div>
    </div>
    <div class="a" style="left:0;top:0;width:218px;height:123px;border:1px solid #b9b9b9;border-top-width:2px"></div>
  </div>
  <div class="a tile" style="top:285px">
    <div class="a av avt">&nbsp;骊如&nbsp;</div>
    <div class="a lbl">
      <svg class="mic" style="left:5px;top:4px" width="13" height="14.500" viewBox="0 0 14 15"><rect x="4.500" y="0" width="6" height="9" rx="3" fill="#fff"/><path d="M2 6.500v.5a5.500 5.500 0 0 0 11 0v-.5" fill="none" stroke="#fff" stroke-width="1.300"/><path d="M7.500 12v2.500" stroke="#fff" stroke-width="1.500"/><path d="M0.500 13.500L12.500 1.500" stroke="#141414" stroke-width="3"/><path d="M0.500 13.500L12.500 1.500" stroke="#e8453c" stroke-width="1.300"/></svg>
      <div class="t nm" style="left:23px">工作人员 林骊如&nbsp;</div>
    </div>
  </div>
  <div class="a tile" style="top:408px">
    <div class="a av avt">&nbsp;筱一&nbsp;</div>
    <div class="a lbl">
      <div class="a" style="left:0;top:0;width:72px;height:22px;background:#17c783"></div>
      <div class="t" style="left:6px;top:6px;font-size:11.600px;color:#fff;font-weight:bold">联席主持人&nbsp;</div>
      <svg style="left:79px;top:4px" width="14" height="15" viewBox="0 0 14 15"><rect x="4" y="0" width="6" height="9.500" rx="3" fill="#fff"/><rect x="4.800" y="5" width="4.400" height="4" rx="2" fill="#2fd36b"/><path d="M1.500 6.500v.5a5.500 5.500 0 0 0 11 0v-.5" fill="none" stroke="#fff" stroke-width="1.400"/><path d="M7 12v2.500" stroke="#fff" stroke-width="1.600"/></svg>
      <div class="t nm" style="left:97px;font-size:10.500px;top:7px">袁筱一&nbsp;</div>
    </div>
  </div>
  <div class="a tile" style="top:531px">
    <div class="a av" style="background:#4d5f4a"><svg style="left:0;top:0" width="42" height="42" viewBox="0 0 42 42">
      <defs><filter id="bl" x="-10%" y="-10%" width="120%" height="120%"><feGaussianBlur stdDeviation=".9"/></filter></defs>
      <g filter="url(#bl)">
      <rect x="-3" y="-3" width="48" height="48" fill="#5f8a5a"/>
      <path d="M-3 -3h30l-6 8-10 8-14 12z" fill="#2f5a35"/>
      <path d="M22 0h20v10c-6 2-12 1-16-3z" fill="#4a7a4c"/>
      <path d="M26 10c6-2 12 2 17 8v10l-10 3-6-8z" fill="#7fa07c"/>
      <path d="M-3 30l14 2 12 10h-26z" fill="#cfcfcc"/>
      <path d="M10 36l16 2 8 6h-24z" fill="#6f6a60"/>
      <path d="M30 28l10 2v12h-10z" fill="#8d9a7e"/>
      <rect x="1.500" y="17" width="5" height="10" rx="2" transform="rotate(25 4 22)" fill="#c65a24"/>
      <path d="M6 22c1-6 5-11 11-12l5 2c2 4 2 9 0 13l-3 8c-4 2-10 0-12-3z" fill="#4f86c4"/>
      <path d="M7 26c-1 3 0 6 2 8l5-2z" fill="#1f2530"/>
      <ellipse cx="23.500" cy="7.500" rx="5.500" ry="3.800" fill="#5b6478"/>
      <path d="M18 10l10 1-1 3-7-1z" fill="#3a3f4f"/>
      <circle cx="22.500" cy="12.500" r="2.600" fill="#b98f7a"/>
      <circle cx="31.500" cy="19.500" r="3.800" fill="#8a6a5e"/>
      <path d="M31 22.500c2 0 3 1 3 2.500l-2 3-3-2z" fill="#d8a88f"/>
      <path d="M19 24c3-2 8-2 11 1l2 7-10 2-4-5z" fill="#d9d2c4"/>
      <path d="M18 32c3-2 9-2 12 0l2 6-10 2z" fill="#2f5fa8"/>
      <path d="M30 29l5 7-1.500 1-5-6z" fill="#d8a88f"/>
      <path d="M21 38h7l1 3h-8z" fill="#d5d5e0"/>
      </g>
    </svg></div>
    <div class="a lbl">
      <svg class="mic" style="left:5px;top:4px" width="13" height="14.500" viewBox="0 0 14 15"><rect x="4.500" y="0" width="6" height="9" rx="3" fill="#fff"/><path d="M2 6.500v.5a5.500 5.500 0 0 0 11 0v-.5" fill="none" stroke="#fff" stroke-width="1.300"/><path d="M7.500 12v2.500" stroke="#fff" stroke-width="1.500"/><path d="M0.500 13.500L12.500 1.500" stroke="#141414" stroke-width="3"/><path d="M0.500 13.500L12.500 1.500" stroke="#e8453c" stroke-width="1.300"/></svg>
      <div class="t nm" style="left:23px;font-weight:bold">Agatheshen</div>
    </div>
  </div>
  <div class="a tile" style="top:654px">
    <div class="a av" style="background:#1a1410"><svg style="left:0;top:0" width="42" height="42" viewBox="0 0 42 42">
      <g filter="url(#bl)">
      <rect x="-3" y="-3" width="48" height="48" fill="#17100c"/>
      <path d="M2 8l10-4 6 8-8 6z" fill="#7a4324"/>
      <path d="M30 4l12 6v22l-8-4-3-12z" fill="#5a3a2a"/>
      <path d="M33 6l5 3-1 4-5-2zM36 13l5 2v4l-5-1zM37 20l5 1v5l-5-2z" fill="#e8e2dc"/>
      <path d="M-2 30l12 2 4 12h-16z" fill="#f1efec"/>
      <path d="M32 30l12-6v20h-14z" fill="#ecebe8"/>
      <path d="M12 30h20l-1 14h-17z" fill="#4a2618"/>
      <path d="M0 24l10 2 2 6-12 2z" fill="#6a4a30"/>
      <circle cx="5" cy="15.500" r="3.300" fill="#d9c23c"/>
      <circle cx="16" cy="7" r="2.800" fill="#d6c040"/>
      <circle cx="18" cy="3.500" r="2.200" fill="#cdb43a"/>
      <circle cx="9" cy="26" r="2.500" fill="#c9a94a"/>
      <circle cx="3" cy="22" r="2" fill="#b9923a"/>
      <path d="M9 17c0-5 4-9 10-9.500 3-1 7 0 8.500 2.500 3 1 5 4 5 7.500 1 3-1 6-3.500 7.500-1 3-5 5-8.500 4.500-4 0-7-2-8.500-5-2-1.500-3-4.500-3-7.500z" fill="#e04a3c"/>
      <path d="M10 16c2-3 5-4 8-3l-2 9-5 1z" fill="#ee6a6a"/>
      <path d="M17 17c1-3 4-4.500 7-4 3 .5 4.500 3 4 6-.5 3-3 5-6 5-3 0-5.500-3-5-7z" fill="#f1a6b6"/>
      <path d="M18 16c1-2 3-3 5-2.500l-2 6-3 0z" fill="#e6d27a"/>
      <path d="M14 27c3 3 10 3 14 0l-1 3h-12z" fill="#c93a30"/>
      </g>
    </svg></div>
    <div class="a lbl"></div>
    <div class="t nm" style="left:4px;top:108px;font-size:10.600px">天天天蓝&nbsp;</div>
    <div class="a" style="left:54px;top:93px;width:110px;height:30px;background:#0b0b0b"></div>
    <svg style="left:102px;top:103px" width="14" height="8" fill="none" stroke="#fff" stroke-width="1.600"><path d="M1 1l6 5.500 6-5.500"/></svg>
  </div>
</div>
<div class="a" style="left:3px;top:861px;width:48px;height:23px;background:#f0a02b"></div>
<div class="t" style="left:10px;top:866px;font-size:12px;color:#fff;font-weight:bold">主持人&nbsp;</div>
<svg style="left:53px;top:865px" width="15" height="15" viewBox="0 0 15 15"><rect x="0" y="0" width="14" height="10" rx="1.500" fill="#fff"/><rect x="3.500" y="12" width="7" height="2" rx="1" fill="#fff"/><path d="M4 7.500c.5-2.500 2.500-3.500 4.500-3.500v-1.500l2.500 2.500-2.500 2.500v-1.500c-1.800 0-3.300.4-4.500 1.500z" fill="#000"/></svg>
<svg style="left:70px;top:865px" width="13" height="15" viewBox="0 0 14 15"><rect x="4" y="0" width="6" height="9.500" rx="3" fill="#fff"/><path d="M1.500 6.500v.5a5.500 5.500 0 0 0 11 0v-.5" fill="none" stroke="#fff" stroke-width="1.500"/><path d="M7 12v2.500" stroke="#fff" stroke-width="1.600"/></svg>
<div class="t" style="left:86px;top:865.500px;font-size:14.600px;color:#fff">主持人 韩铭的屏幕共享&nbsp;</div>
</body>
</html>
